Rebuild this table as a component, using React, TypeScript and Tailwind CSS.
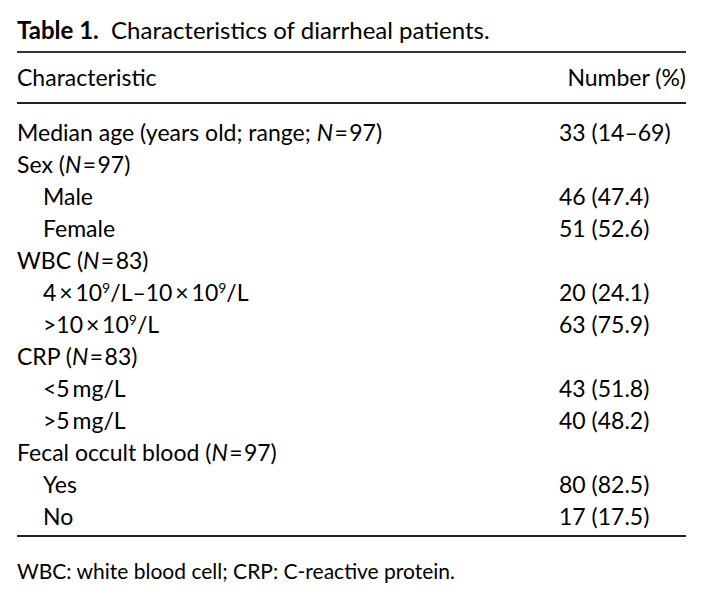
import * as React from "react";

type Row = { label: React.ReactNode; value?: string; indent?: boolean };

const N = <span className="italic">N</span>;
const sup9 = <span className="text-[14px] relative -top-[8px]">9</span>;

const rows: Row[] = [
	{ label: <>Median age (years old; range; {N}&#8202;=&#8202;97)</>, value: "33 (14–69)" },
	{ label: <>Sex ({N}&#8202;=&#8202;97)</> },
	{ label: "Male", value: "46 (47.4)", indent: true },
	{ label: "Female", value: "51 (52.6)", indent: true },
	{ label: <>WBC ({N}&#8202;=&#8202;83)</> },
	{
		label: (
			<>
				4&#8201;×&#8201;10{sup9}/L–10&#8201;×&#8201;10{sup9}/L
			</>
		),
		value: "20 (24.1)",
		indent: true,
	},
	{
		label: (
			<>
				&gt;10&#8201;×&#8201;10{sup9}/L
			</>
		),
		value: "63 (75.9)",
		indent: true,
	},
	{ label: <>CRP ({N}&#8202;=&#8202;83)</> },
	{ label: <>&lt;5&#8201;mg/L</>, value: "43 (51.8)", indent: true },
	{ label: <>&gt;5&#8201;mg/L</>, value: "40 (48.2)", indent: true },
	{ label: <>Fecal occult blood ({N}&#8202;=&#8202;97)</> },
	{ label: "Yes", value: "80 (82.5)", indent: true },
	{ label: "No", value: "17 (17.5)", indent: true },
];

export default function App() {
	return (
		<div
			className="w-[703px] h-[594px] bg-white text-black px-[17px] pt-[15px]"
			style={{ fontFamily: "Lato, 'Open Sans', sans-serif" }}
		>
			<h1 className="text-[24px] leading-[30px]">
				<span className="font-bold">Table 1.</span>&nbsp; Characteristics of diarrheal patients.
			</h1>
			<div className="w-[669px] mt-[6px] border-t-2 border-[#333]" />
			<div className="w-[669px] h-[49px] flex items-center justify-between text-[23px]">
				<span>Characteristic</span>
				<span>Number (%)</span>
			</div>
			<div className="w-[669px] border-t-2 border-[#222]" />
			<div className="w-[669px] pt-[12px] pb-[3px]">
				{rows.map((r, i) => (
					<div key={i} className="flex h-[32px] items-center text-[23px]">
						<div className={r.indent ? "flex-1 pl-[26px]" : "flex-1"}>{r.label}</div>
						<div className="w-[127px]">{r.value}</div>
					</div>
				))}
			</div>
			<div className="w-[669px] border-t-2 border-[#222]" />
			<p className="mt-[18px] text-[21px]">WBC: white blood cell; CRP: C-reactive protein.</p>
		</div>
	);
}
